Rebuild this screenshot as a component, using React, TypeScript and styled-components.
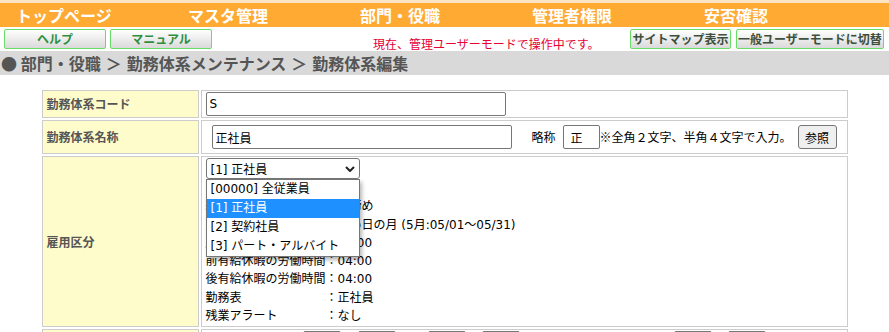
import React from 'react'
import styled, { createGlobalStyle } from 'styled-components'

const MIX = `"DejaVu Sans", "Noto Sans CJK JP", sans-serif`
const JP = `"Noto Sans CJK JP", sans-serif`

const GlobalStyle = createGlobalStyle`
  * { box-sizing: border-box; }
  body {
    margin: 0;
    background: #fff;
    color: #000;
    font-family: ${MIX};
    font-size: 12px;
  }
`

const TopStrip = styled.div`
  height: 3px;
  background: #fde4c2;
`

const NavBar = styled.nav`
  display: flex;
  height: 24px;
  padding-left: 16px;
  background: #ffaa33;
`

const NavItem = styled.div`
  flex: none;
  width: 172px;
  color: #fff;
  font: bold 16px/24px ${JP};
`

const ToolRow = styled.div`
  display: flex;
  align-items: flex-start;
  height: 24px;
  padding: 2px 5px 0 4px;
`

const ToolGroup = styled.div<{ $gap: number; $push?: boolean }>`
  display: flex;
  gap: ${p => p.$gap}px;
  margin-left: ${p => (p.$push ? 'auto' : '0')};
`

const ToolButton = styled.button<{ $width: number; $dark?: boolean }>`
  width: ${p => p.$width}px;
  height: 20px;
  padding: 0;
  border: 1px solid #66dd66;
  border-radius: 2px;
  background: linear-gradient(#ffffff, #dadada);
  color: ${p => (p.$dark ? '#3d4f3d' : '#2f8f3f')};
  font: bold 12px/18px ${JP};
`

const Notice = styled.div`
  margin: 8px 0 0 161px;
  color: #e60033;
  font: 12px/14px ${JP};
`

const Crumbs = styled.div`
  display: flex;
  align-items: center;
  height: 24px;
  padding-left: 1px;
  background: #d9d9d9;
  color: #555;
  font: bold 16px/24px ${JP};
  white-space: pre;
`

const Sep = styled.span`
  margin: 0 5px;
`

const FormTable = styled.table`
  width: 810px;
  margin: 13px auto 0;
  border-collapse: separate;
  border-spacing: 2px;
`

const LabelCell = styled.th`
  width: 157px;
  padding: 0 4px;
  border: 1px solid #ccc;
  background: #fffccc;
  color: #555;
  text-align: left;
  vertical-align: middle;
  font: bold 12px/16px ${JP};
`

const ValueCell = styled.td<{ $pad: number }>`
  padding: ${p => p.$pad}px 4px;
  border: 1px solid #ccc;
  vertical-align: top;
`

const TextInput = styled.input<{ $width: number; $indent?: number }>`
  display: block;
  width: ${p => p.$width}px;
  height: 24px;
  margin-left: ${p => p.$indent ?? 0}px;
  padding: 0 3px;
  border: 1px solid #767676;
  border-radius: 2px;
  color: #000;
  font: 12px ${MIX};
`

const InlineRow = styled.div`
  display: flex;
  align-items: center;
`

const ShortLabel = styled.span`
  margin: 0 7px 0 20px;
  font: 12px/16px ${JP};
`

const ShortInput = styled(TextInput)`
  padding-left: 7px;
`

const Note = styled.span`
  font: 12px/16px ${JP};
  white-space: nowrap;
`

const PlainButton = styled.button`
  width: 39px;
  height: 24px;
  margin-left: 6px;
  padding: 0;
  border: 1px solid #767676;
  border-radius: 3px;
  background: #efefef;
  color: #000;
  font: 12px ${JP};
`

const SelectWrap = styled.div`
  position: relative;
  width: 154px;
`

const SelectBox = styled.div`
  display: flex;
  align-items: center;
  justify-content: space-between;
  height: 21px;
  padding: 0 4px;
  border: 1px solid #767676;
  border-radius: 3px;
  font: 12px ${MIX};
`

const DropList = styled.ul`
  position: absolute;
  top: 100%;
  left: 0;
  z-index: 2;
  width: 154px;
  margin: 0;
  padding: 0;
  list-style: none;
  border: 1px solid #767676;
  background: #fff;
  box-shadow: 2px 3px 4px rgba(0, 0, 0, 0.28);
`

const DropItem = styled.li<{ $active?: boolean }>`
  height: 19px;
  padding-left: 4px;
  background: ${p => (p.$active ? '#1e90ff' : '#fff')};
  color: ${p => (p.$active ? '#fff' : '#000')};
  font: 12px/19px ${MIX};
  white-space: nowrap;
`

const InfoLine = styled.div`
  display: flex;
  height: 18.25px;
  font: 12px/18.25px ${MIX};
  white-space: nowrap;
`

const InfoLabel = styled.span`
  flex: none;
  width: 120px;
`

const SmallInput = styled.input<{ $gap: number }>`
  width: 38px;
  height: 22px;
  margin-left: ${p => p.$gap}px;
  border: 1px solid #767676;
  border-radius: 2px;
  font: 12px ${MIX};
`

const navItems = ['トップページ', 'マスタ管理', '部門・役職', '管理者権限', '安否確認']

const employTypes = [
  { label: '[00000] 全従業員' },
  { label: '[1] 正社員', active: true },
  { label: '[2] 契約社員' },
  { label: '[3] パート・アルバイト' },
]

// first rows sit mostly under the open list
const infoLines = [
  ['有給付与', '有'],
  ['締め日', '末締め'],
  ['対象月', '締め日の月 (5月:05/01～05/31)'],
  ['所定労働時間', '08:00'],
  ['前有給休暇の労働時間', '04:00'],
  ['後有給休暇の労働時間', '04:00'],
  ['勤務表', '正社員'],
  ['残業アラート', 'なし'],
]

const timeGaps = [97, 17, 32, 16, 154, 16]

const Chevron = () => (
  <svg width="10" height="6" viewBox="0 0 10 6">
    <path d="M1 1 L5 5 L9 1" fill="none" stroke="#222" strokeWidth="2" />
  </svg>
)

const App = () => {
  return (
    <>
      <GlobalStyle />
      <TopStrip />
      <NavBar>
        {navItems.map(item => (
          <NavItem key={item}>{item}</NavItem>
        ))}
      </NavBar>
      <ToolRow>
        <ToolGroup $gap={4}>
          <ToolButton $width={102}>ヘルプ</ToolButton>
          <ToolButton $width={102}>マニュアル</ToolButton>
        </ToolGroup>
        <Notice>現在、管理ユーザーモードで操作中です。</Notice>
        <ToolGroup $gap={5} $push>
          <ToolButton $width={101} $dark>
            サイトマップ表示
          </ToolButton>
          <ToolButton $width={148} $dark>
            一般ユーザーモードに切替
          </ToolButton>
        </ToolGroup>
      </ToolRow>
      <Crumbs>
        ● 部門・役職<Sep>＞</Sep>勤務体系メンテナンス<Sep>＞</Sep>勤務体系編集
      </Crumbs>

      <FormTable>
        <tbody>
          <tr>
            <LabelCell>勤務体系コード</LabelCell>
            <ValueCell $pad={1}>
              <TextInput $width={300} value="S" readOnly />
            </ValueCell>
          </tr>
          <tr>
            <LabelCell>勤務体系名称</LabelCell>
            <ValueCell $pad={4}>
              <InlineRow>
                <TextInput $width={300} $indent={6} value="正社員" readOnly />
                <ShortLabel>略称</ShortLabel>
                <ShortInput $width={37} value="正" readOnly />
                <Note>※全角２文字、半角４文字で入力。</Note>
                <PlainButton>参照</PlainButton>
              </InlineRow>
            </ValueCell>
          </tr>
          <tr>
            <LabelCell>雇用区分</LabelCell>
            <ValueCell $pad={1}>
              <SelectWrap>
                <SelectBox>
                  <span>[1] 正社員</span>
                  <Chevron />
                </SelectBox>
                <DropList>
                  {employTypes.map(t => (
                    <DropItem key={t.label} $active={t.active}>
                      {t.label}
                    </DropItem>
                  ))}
                </DropList>
              </SelectWrap>
              {infoLines.map(([label, value]) => (
                <InfoLine key={label}>
                  <InfoLabel>{label}</InfoLabel>
                  <span>：{value}</span>
                </InfoLine>
              ))}
            </ValueCell>
          </tr>
          <tr>
            <LabelCell />
            <ValueCell $pad={1}>
              <InlineRow>
                {timeGaps.map((gap, i) => (
                  <SmallInput key={i} $gap={gap} readOnly />
                ))}
              </InlineRow>
            </ValueCell>
          </tr>
        </tbody>
      </FormTable>
    </>
  )
}

export default App
